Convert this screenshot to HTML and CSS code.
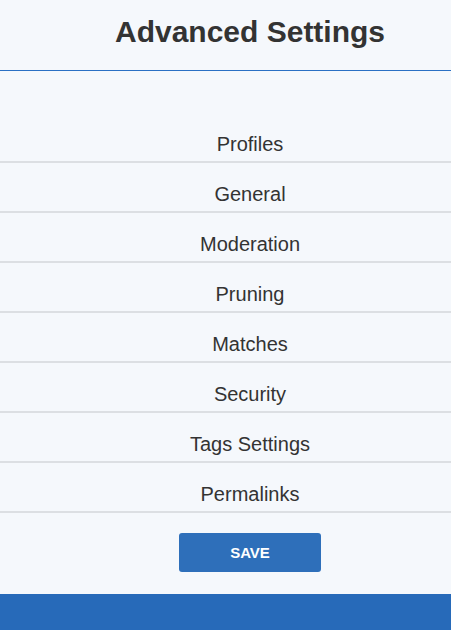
FILE: index.html
```html
<!DOCTYPE html>
<html>
<head>
<meta charset="utf-8">
<link rel="stylesheet" href="styles.css">
</head>
<body>
<div class="page">
  <header class="header">
    <h1 class="title">Advanced Settings</h1>
  </header>
  <ul class="menu">
    <li class="menu-item">Profiles</li>
    <li class="menu-item">General</li>
    <li class="menu-item">Moderation</li>
    <li class="menu-item">Pruning</li>
    <li class="menu-item">Matches</li>
    <li class="menu-item">Security</li>
    <li class="menu-item">Tags Settings</li>
    <li class="menu-item">Permalinks</li>
  </ul>
  <div class="actions">
    <button class="save-btn">SAVE</button>
  </div>
  <footer class="footer"></footer>
</div>
</body>
</html>
```

FILE: styles.css
```css
html, body {
  margin: 0;
  padding: 0;
  background: #f5f8fc;
  font-family: "Liberation Sans", Arial, sans-serif;
  color: #333333;
  overflow: hidden;
}

.page {
  width: 451px;
  height: 630px;
  display: flex;
  flex-direction: column;
}

.header {
  height: 71px;
  flex-shrink: 0;
  box-sizing: border-box;
  padding: 18px 0 0 49px;
  border-bottom: 1px solid #2a70c4;
}

.title {
  margin: 0;
  font-size: 30px;
  font-weight: bold;
  line-height: 28px;
  text-align: center;
  color: #333333;
}

.menu {
  list-style: none;
  margin: 42px 0 0 0;
  padding: 0;
  flex-shrink: 0;
}

.menu-item {
  height: 50px;
  box-sizing: border-box;
  padding: 20px 0 5px 49px;
  font-size: 20px;
  line-height: 23px;
  text-align: center;
  border-bottom: 2px solid #dcdfe3;
  color: #333333;
}

.actions {
  display: flex;
  justify-content: center;
  padding: 20px 0 0 49px;
  flex-shrink: 0;
}

.save-btn {
  width: 142px;
  height: 39px;
  border: none;
  border-radius: 3px;
  background: #2e6fba;
  color: #ffffff;
  font-family: "Liberation Sans", Arial, sans-serif;
  font-size: 15px;
  font-weight: bold;
  padding: 0;
}

.footer {
  margin-top: 22px;
  flex: 1;
  background: #276ab9;
}
```
